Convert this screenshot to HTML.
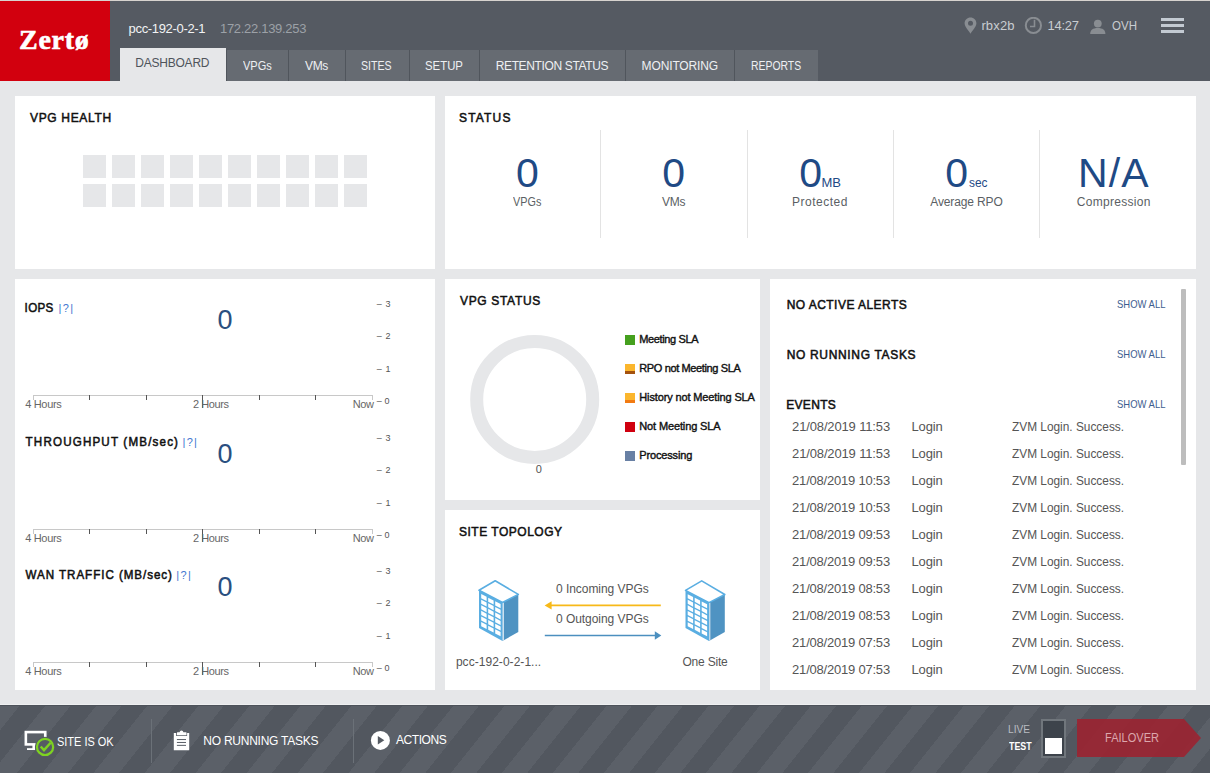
<!DOCTYPE html>
<html><head><meta charset="utf-8"><title>Zerto Dashboard</title>
<style>
*{margin:0;padding:0;box-sizing:border-box}
html,body{width:1210px;height:773px;overflow:hidden;background:#e6e7e9;font-family:"Liberation Sans",sans-serif}
.a{position:absolute}
.t{position:absolute;line-height:1;white-space:pre;transform-origin:0 0}
.panel{position:absolute;background:#fff}
.sq{position:absolute;width:23px;height:23px;background:#e6e7e9}
.tab{position:absolute;top:50px;height:31px;background:#666b72}
.sep{position:absolute;top:50px;width:1px;height:31px;background:#50555c}
.ax{position:absolute;height:1px;background:#c8c8c8}
.tk{position:absolute;width:1px;height:5px;background:#555}
.vd{position:absolute;width:1px;background:#e3e3e3;top:130px;height:108px}
.lg{position:absolute;left:625px;width:10px;height:10px}
</style></head><body>
<!-- header -->
<div class="a" style="left:0;top:0;width:1210px;height:81px;background:#555a62"></div>
<div class="a" style="left:0;top:0;width:1210px;height:1px;background:#d7d3cf"></div>
<div class="a" style="left:0;top:1px;width:110px;height:80px;background:#d2000e"></div>
<div class="a" style="left:120px;top:48px;width:106px;height:33px;background:#e6e7e9"></div>
<div class="tab" style="left:227px;width:591px"></div>
<div class="sep" style="left:226px"></div>
<div class="sep" style="left:288px"></div>
<div class="sep" style="left:345px"></div>
<div class="sep" style="left:409px"></div>
<div class="sep" style="left:479px"></div>
<div class="sep" style="left:625px"></div>
<div class="sep" style="left:734px"></div>
<!-- header icons -->
<svg class="a" style="left:964px;top:17px" width="13" height="17" viewBox="0 0 13 17"><path d="M6.5 0.5C3.2 0.5 0.6 3.1 0.6 6.3c0 3.6 4.2 7.3 5.9 10.4c1.7-3.1 5.9-6.8 5.9-10.4C12.4 3.1 9.8 0.5 6.5 0.5z M6.5 3.8a2.5 2.5 0 1 1 0 5a2.5 2.5 0 1 1 0-5z" fill="#898d92" fill-rule="evenodd"/></svg>
<svg class="a" style="left:1024px;top:17px" width="19" height="18" viewBox="0 0 19 18"><circle cx="9.4" cy="8.4" r="7.6" fill="none" stroke="#898d92" stroke-width="2"/><path d="M10.5 2.8V9.5H6" fill="none" stroke="#898d92" stroke-width="1.6"/></svg>
<svg class="a" style="left:1090px;top:19px" width="16" height="15" viewBox="0 0 16 15"><circle cx="7.8" cy="4.6" r="3.9" fill="#898d92"/><path d="M0.2 15c0-4 2.6-6 7.6-6s7.6 2 7.6 6z" fill="#898d92"/></svg>
<div class="a" style="left:1161px;top:18px;width:23px;height:3px;background:#c3cad2"></div>
<div class="a" style="left:1161px;top:24px;width:23px;height:3px;background:#c3cad2"></div>
<div class="a" style="left:1161px;top:30px;width:23px;height:3px;background:#c3cad2"></div>

<!-- panels -->
<div class="panel" style="left:15px;top:96px;width:420px;height:173px"></div>
<div class="panel" style="left:445px;top:96px;width:751px;height:173px"></div>
<div class="panel" style="left:15px;top:279px;width:420px;height:411px"></div>
<div class="panel" style="left:445px;top:279px;width:315px;height:221px"></div>
<div class="panel" style="left:445px;top:510px;width:315px;height:180px"></div>
<div class="panel" style="left:770px;top:279px;width:426px;height:411px"></div>

<!-- VPG health squares -->
<div class="sq" style="left:83px;top:155px"></div>
<div class="sq" style="left:112px;top:155px"></div>
<div class="sq" style="left:141px;top:155px"></div>
<div class="sq" style="left:170px;top:155px"></div>
<div class="sq" style="left:199px;top:155px"></div>
<div class="sq" style="left:228px;top:155px"></div>
<div class="sq" style="left:257px;top:155px"></div>
<div class="sq" style="left:286px;top:155px"></div>
<div class="sq" style="left:315px;top:155px"></div>
<div class="sq" style="left:344px;top:155px"></div>
<div class="sq" style="left:83px;top:184px"></div>
<div class="sq" style="left:112px;top:184px"></div>
<div class="sq" style="left:141px;top:184px"></div>
<div class="sq" style="left:170px;top:184px"></div>
<div class="sq" style="left:199px;top:184px"></div>
<div class="sq" style="left:228px;top:184px"></div>
<div class="sq" style="left:257px;top:184px"></div>
<div class="sq" style="left:286px;top:184px"></div>
<div class="sq" style="left:315px;top:184px"></div>
<div class="sq" style="left:344px;top:184px"></div>

<!-- status dividers -->
<div class="vd" style="left:600px"></div>
<div class="vd" style="left:747px"></div>
<div class="vd" style="left:893px"></div>
<div class="vd" style="left:1039px"></div>

<!-- charts -->
<div class="ax" style="left:33px;top:395px;width:340px"></div>
<div class="a" style="left:33px;top:395px;width:1px;height:5px;background:#c8c8c8"></div>
<div class="tk" style="left:89px;top:395px"></div>
<div class="tk" style="left:146px;top:395px"></div>
<div class="tk" style="left:202px;top:395px;height:13px"></div>
<div class="tk" style="left:259px;top:395px"></div>
<div class="tk" style="left:315px;top:395px"></div>
<div class="a" style="left:372px;top:395px;width:1px;height:5px;background:#c8c8c8"></div>
<div class="ax" style="left:33px;top:529px;width:340px"></div>
<div class="a" style="left:33px;top:529px;width:1px;height:5px;background:#c8c8c8"></div>
<div class="tk" style="left:89px;top:529px"></div>
<div class="tk" style="left:146px;top:529px"></div>
<div class="tk" style="left:202px;top:529px;height:13px"></div>
<div class="tk" style="left:259px;top:529px"></div>
<div class="tk" style="left:315px;top:529px"></div>
<div class="a" style="left:372px;top:529px;width:1px;height:5px;background:#c8c8c8"></div>
<div class="ax" style="left:33px;top:662px;width:340px"></div>
<div class="a" style="left:33px;top:662px;width:1px;height:5px;background:#c8c8c8"></div>
<div class="tk" style="left:89px;top:662px"></div>
<div class="tk" style="left:146px;top:662px"></div>
<div class="tk" style="left:202px;top:662px;height:13px"></div>
<div class="tk" style="left:259px;top:662px"></div>
<div class="tk" style="left:315px;top:662px"></div>
<div class="a" style="left:372px;top:662px;width:1px;height:5px;background:#c8c8c8"></div>

<!-- donut -->
<svg class="a" style="left:469px;top:333px" width="132" height="132" viewBox="0 0 132 132"><circle cx="65.7" cy="66.4" r="58" fill="none" stroke="#e6e7e9" stroke-width="13"/></svg>
<!-- legend -->
<div class="lg" style="top:335px;background:#45a01e"></div>
<div class="lg" style="top:364px;background:#fbb62d"></div><div class="lg" style="top:371px;height:3px;background:#a3520f"></div>
<div class="lg" style="top:393px;background:#fbb62d"></div><div class="lg" style="top:400px;height:3px;background:#f27b12"></div>
<div class="lg" style="top:422px;background:#d0000f"></div>
<div class="lg" style="top:451px;background:#6880a4"></div>

<!-- topology -->
<svg class="a" style="left:469px;top:575px" width="60" height="70" viewBox="0 0 60 70"><g transform="translate(0 0.4)">
<path d="M33.5 27.1L49.3 19V56.6L33.5 65.6z" fill="#4f93c2"/>
<path d="M26.2 5.4L49.3 19L33.5 27.1L10 14.9z" fill="#fff" stroke="#5aaee2" stroke-width="1.6" stroke-linejoin="round"/>
<path d="M10 14.9L33.5 27.1V65.6L10 52.5z" fill="#5aaee2"/>
<path d="M34.3 27.5V65" stroke="#fff" stroke-width="0.9"/>
<g transform="translate(10 14.9) skewY(27.4)">
<rect x="2.2" y="2.6" width="5.4" height="4.1" fill="#fff"/>
<rect x="2.2" y="8.2" width="5.4" height="4.1" fill="#fff"/>
<rect x="2.2" y="13.8" width="5.4" height="4.1" fill="#fff"/>
<rect x="2.2" y="19.4" width="5.4" height="4.1" fill="#fff"/>
<rect x="2.2" y="25.0" width="5.4" height="4.1" fill="#fff"/>
<rect x="2.2" y="30.6" width="5.4" height="4.1" fill="#fff"/>
<rect x="9.2" y="2.6" width="5.4" height="4.1" fill="#fff"/>
<rect x="9.2" y="8.2" width="5.4" height="4.1" fill="#fff"/>
<rect x="9.2" y="13.8" width="5.4" height="4.1" fill="#fff"/>
<rect x="9.2" y="19.4" width="5.4" height="4.1" fill="#fff"/>
<rect x="9.2" y="25.0" width="5.4" height="4.1" fill="#fff"/>
<rect x="9.2" y="30.6" width="5.4" height="4.1" fill="#fff"/>
<rect x="16.2" y="2.6" width="5.4" height="4.1" fill="#fff"/>
<rect x="16.2" y="8.2" width="5.4" height="4.1" fill="#fff"/>
<rect x="16.2" y="13.8" width="5.4" height="4.1" fill="#fff"/>
<rect x="16.2" y="19.4" width="5.4" height="4.1" fill="#fff"/>
<rect x="16.2" y="25.0" width="5.4" height="4.1" fill="#fff"/>
<rect x="16.2" y="30.6" width="5.4" height="4.1" fill="#fff"/>
</g></g>
</svg>
<svg class="a" style="left:675px;top:575px" width="60" height="70" viewBox="0 0 60 70"><g transform="translate(0.5 0.5)">
<path d="M33.5 27.1L49.3 19V56.6L33.5 65.6z" fill="#4f93c2"/>
<path d="M26.2 5.4L49.3 19L33.5 27.1L10 14.9z" fill="#fff" stroke="#5aaee2" stroke-width="1.6" stroke-linejoin="round"/>
<path d="M10 14.9L33.5 27.1V65.6L10 52.5z" fill="#5aaee2"/>
<path d="M34.3 27.5V65" stroke="#fff" stroke-width="0.9"/>
<g transform="translate(10 14.9) skewY(27.4)">
<rect x="2.2" y="2.6" width="5.4" height="4.1" fill="#fff"/>
<rect x="2.2" y="8.2" width="5.4" height="4.1" fill="#fff"/>
<rect x="2.2" y="13.8" width="5.4" height="4.1" fill="#fff"/>
<rect x="2.2" y="19.4" width="5.4" height="4.1" fill="#fff"/>
<rect x="2.2" y="25.0" width="5.4" height="4.1" fill="#fff"/>
<rect x="2.2" y="30.6" width="5.4" height="4.1" fill="#fff"/>
<rect x="9.2" y="2.6" width="5.4" height="4.1" fill="#fff"/>
<rect x="9.2" y="8.2" width="5.4" height="4.1" fill="#fff"/>
<rect x="9.2" y="13.8" width="5.4" height="4.1" fill="#fff"/>
<rect x="9.2" y="19.4" width="5.4" height="4.1" fill="#fff"/>
<rect x="9.2" y="25.0" width="5.4" height="4.1" fill="#fff"/>
<rect x="9.2" y="30.6" width="5.4" height="4.1" fill="#fff"/>
<rect x="16.2" y="2.6" width="5.4" height="4.1" fill="#fff"/>
<rect x="16.2" y="8.2" width="5.4" height="4.1" fill="#fff"/>
<rect x="16.2" y="13.8" width="5.4" height="4.1" fill="#fff"/>
<rect x="16.2" y="19.4" width="5.4" height="4.1" fill="#fff"/>
<rect x="16.2" y="25.0" width="5.4" height="4.1" fill="#fff"/>
<rect x="16.2" y="30.6" width="5.4" height="4.1" fill="#fff"/>
</g></g>
</svg>
<svg class="a" style="left:540px;top:595px" width="130" height="50" viewBox="0 0 130 50"><path d="M10 10.4H120.8" stroke="#f7b919" stroke-width="1.6"/><path d="M4.6 10.4L11.6 6.2V14.6z" fill="#f7b919"/><path d="M4.8 40.5H116" stroke="#4b8fbf" stroke-width="1.6"/><path d="M121.3 40.5L114.8 36.3V44.7z" fill="#4b8fbf"/></svg>

<!-- scrollbar -->
<div class="a" style="left:1181px;top:289px;width:5px;height:176px;background:#bdbdbd;border-radius:1px"></div>

<!-- footer -->
<div class="a" style="left:0;top:704px;width:1210px;height:69px;background:repeating-linear-gradient(128.66deg,#5b6068 0px,#5b6068 16.45px,#52575f 16.45px,#52575f 36.4px,#5b6068 36.4px,#5b6068 39.85px)"></div>
<div class="a" style="left:0;top:704px;width:1210px;height:1px;background:#eff0f1"></div>
<div class="a" style="left:0;top:705px;width:1210px;height:1px;background:#4d525a"></div>
<div class="a" style="left:151px;top:719px;width:1px;height:44px;background:#6b7178"></div>
<div class="a" style="left:353px;top:719px;width:1px;height:44px;background:#6b7178"></div>
<!-- site ok icon -->
<svg class="a" style="left:20px;top:725px" width="40" height="32" viewBox="0 0 40 32"><rect x="5.85" y="7.1" width="19.4" height="12.3" fill="none" stroke="#fff" stroke-width="2.6"/><rect x="12.4" y="20" width="2.7" height="4.9" fill="#fff"/><rect x="7" y="23.2" width="8.1" height="1.8" fill="#fff"/><circle cx="25.05" cy="21.9" r="10.2" fill="#565b63"/><circle cx="25.05" cy="21.9" r="8.1" fill="none" stroke="#7ed321" stroke-width="2.2"/><path d="M20.7 21.5L24 25.1L30.6 17.8" fill="none" stroke="#7ed321" stroke-width="2.4"/></svg>
<!-- clipboard -->
<svg class="a" style="left:168px;top:725px" width="30" height="30" viewBox="0 0 30 30"><path d="M5.8 8H8.1V10.9H19.1V8H21.2V25.2H5.8Z" fill="#fff"/><path d="M8.9 7.9Q8.9 7.3 9.5 7.3H11.6Q11.9 5.4 13.5 5.4Q15.1 5.4 15.4 7.3H18.1Q18.5 7.3 18.5 7.9V10.2H8.9Z" fill="#fff"/><rect x="8.9" y="14.05" width="9.1" height="1" fill="#5a5f67"/><rect x="8.9" y="16.96" width="9.1" height="1" fill="#5a5f67"/><rect x="8.9" y="19.87" width="9.1" height="1" fill="#5a5f67"/></svg>
<!-- play -->
<svg class="a" style="left:370px;top:730px" width="21" height="21" viewBox="0 0 21 21"><circle cx="10.4" cy="10.4" r="9.5" fill="#fff"/><path d="M7.8 6.1L14.3 10.3L7.8 14.4z" fill="#555a62"/></svg>
<!-- toggle -->
<div class="a" style="left:1041px;top:719px;width:25px;height:39px;background:#3d434b;border:2px solid #70767c"></div>
<div class="a" style="left:1045px;top:738px;width:17px;height:16px;background:#fff"></div>
<!-- failover -->
<svg class="a" style="left:1077px;top:719px" width="125" height="38" viewBox="0 0 125 38"><path d="M0 0H107L124 19L107 38H0z" fill="#a0202e" fill-opacity="0.85"/></svg>

<div class="t" style="left:19.0px;top:26.29px;font-size:28px;font-weight:700;color:#fff;letter-spacing:0.75px;font-family:'Liberation Serif', serif;-webkit-text-stroke:0.6px #fff;">Zertø</div>
<div class="t" style="left:128.6px;top:21.89px;font-size:13px;font-weight:400;color:#f2f3f4;letter-spacing:-0.333px;font-family:'Liberation Sans', sans-serif;">pcc-192-0-2-1</div>
<div class="t" style="left:220.0px;top:21.89px;font-size:13px;font-weight:400;color:#9ca1a7;letter-spacing:-0.308px;font-family:'Liberation Sans', sans-serif;">172.22.139.253</div>
<div class="t" style="left:981.4px;top:18.79px;font-size:13px;font-weight:400;color:#c9cdd1;letter-spacing:0.15px;font-family:'Liberation Sans', sans-serif;">rbx2b</div>
<div class="t" style="left:1047.6px;top:18.79px;font-size:13px;font-weight:400;color:#c9cdd1;letter-spacing:-0.3px;font-family:'Liberation Sans', sans-serif;">14:27</div>
<div class="t" style="left:1111.7px;top:18.79px;font-size:13px;font-weight:400;color:#c9cdd1;letter-spacing:0px;font-family:'Liberation Sans', sans-serif;transform:scale(0.8852,1.0);">OVH</div>
<div class="t" style="left:135.3px;top:56.74px;font-size:12px;font-weight:400;color:#4f545b;letter-spacing:-0.225px;font-family:'Liberation Sans', sans-serif;">DASHBOARD</div>
<div class="t" style="left:242.8px;top:59.54px;font-size:12px;font-weight:400;color:#eef0f2;letter-spacing:0px;font-family:'Liberation Sans', sans-serif;transform:scale(0.9194,1.0);">VPGs</div>
<div class="t" style="left:305.0px;top:59.54px;font-size:12px;font-weight:400;color:#eef0f2;letter-spacing:-0.35px;font-family:'Liberation Sans', sans-serif;">VMs</div>
<div class="t" style="left:361.12px;top:59.54px;font-size:12px;font-weight:400;color:#eef0f2;letter-spacing:0px;font-family:'Liberation Sans', sans-serif;transform:scale(0.8824,1.0);">SITES</div>
<div class="t" style="left:425.05px;top:59.54px;font-size:12px;font-weight:400;color:#eef0f2;letter-spacing:0px;font-family:'Liberation Sans', sans-serif;transform:scale(0.9487,1.0);">SETUP</div>
<div class="t" style="left:495.7px;top:59.54px;font-size:12px;font-weight:400;color:#eef0f2;letter-spacing:-0.36px;font-family:'Liberation Sans', sans-serif;">RETENTION STATUS</div>
<div class="t" style="left:641.6px;top:59.54px;font-size:12px;font-weight:400;color:#eef0f2;letter-spacing:-0.133px;font-family:'Liberation Sans', sans-serif;">MONITORING</div>
<div class="t" style="left:750.63px;top:59.54px;font-size:12px;font-weight:400;color:#eef0f2;letter-spacing:0px;font-family:'Liberation Sans', sans-serif;transform:scale(0.8684,1.0);">REPORTS</div>
<div class="t" style="left:30.0px;top:110.97px;font-size:12px;font-weight:400;color:#111;letter-spacing:0.667px;font-family:'Liberation Sans', sans-serif;transform:scale(1.0,1.125);-webkit-text-stroke:0.5px #111;">VPG HEALTH</div>
<div class="t" style="left:459.0px;top:110.97px;font-size:12px;font-weight:400;color:#111;letter-spacing:1.18px;font-family:'Liberation Sans', sans-serif;transform:scale(1.0,1.125);-webkit-text-stroke:0.5px #111;">STATUS</div>
<div class="t" style="left:460.0px;top:293.77px;font-size:12px;font-weight:400;color:#111;letter-spacing:0.667px;font-family:'Liberation Sans', sans-serif;transform:scale(1.0,1.125);-webkit-text-stroke:0.5px #111;">VPG STATUS</div>
<div class="t" style="left:459.0px;top:525.17px;font-size:12px;font-weight:400;color:#111;letter-spacing:0.508px;font-family:'Liberation Sans', sans-serif;transform:scale(1.0,1.125);-webkit-text-stroke:0.5px #111;">SITE TOPOLOGY</div>
<div class="t" style="left:786.7px;top:297.77px;font-size:12px;font-weight:400;color:#111;letter-spacing:0.46px;font-family:'Liberation Sans', sans-serif;transform:scale(1.0,1.125);-webkit-text-stroke:0.5px #111;">NO ACTIVE ALERTS</div>
<div class="t" style="left:786.7px;top:347.77px;font-size:12px;font-weight:400;color:#111;letter-spacing:0.667px;font-family:'Liberation Sans', sans-serif;transform:scale(1.0,1.125);-webkit-text-stroke:0.5px #111;">NO RUNNING TASKS</div>
<div class="t" style="left:786.2px;top:397.87px;font-size:12px;font-weight:400;color:#111;letter-spacing:0.32px;font-family:'Liberation Sans', sans-serif;transform:scale(1.0,1.125);-webkit-text-stroke:0.5px #111;">EVENTS</div>
<div class="t" style="left:1117.3px;top:299.29px;font-size:11px;font-weight:400;color:#3d5d8f;letter-spacing:0px;font-family:'Liberation Sans', sans-serif;transform:scale(0.8607,1.0);">SHOW ALL</div>
<div class="t" style="left:1117.3px;top:349.29px;font-size:11px;font-weight:400;color:#3d5d8f;letter-spacing:0px;font-family:'Liberation Sans', sans-serif;transform:scale(0.8607,1.0);">SHOW ALL</div>
<div class="t" style="left:1117.3px;top:399.29px;font-size:11px;font-weight:400;color:#3d5d8f;letter-spacing:0px;font-family:'Liberation Sans', sans-serif;transform:scale(0.8607,1.0);">SHOW ALL</div>
<div class="t" style="left:515.95px;top:153.09px;font-size:41px;font-weight:400;color:#1f4a85;letter-spacing:0px;font-family:'Liberation Sans', sans-serif;">0</div>
<div class="t" style="left:662.15px;top:153.09px;font-size:41px;font-weight:400;color:#1f4a85;letter-spacing:0px;font-family:'Liberation Sans', sans-serif;">0</div>
<div class="t" style="left:799.25px;top:153.09px;font-size:41px;font-weight:400;color:#1f4a85;letter-spacing:0px;font-family:'Liberation Sans', sans-serif;">0</div>
<div class="t" style="left:821.5px;top:175.59px;font-size:13px;font-weight:400;color:#1f4a85;letter-spacing:0.0px;font-family:'Liberation Sans', sans-serif;">MB</div>
<div class="t" style="left:945.2px;top:153.09px;font-size:41px;font-weight:400;color:#1f4a85;letter-spacing:0px;font-family:'Liberation Sans', sans-serif;">0</div>
<div class="t" style="left:968.6px;top:176.09px;font-size:13px;font-weight:400;color:#1f4a85;letter-spacing:0px;font-family:'Liberation Sans', sans-serif;transform:scale(0.915,1.0);">sec</div>
<div class="t" style="left:1078.0px;top:153.09px;font-size:41px;font-weight:400;color:#1f4a85;letter-spacing:1.1px;font-family:'Liberation Sans', sans-serif;">N/A</div>
<div class="t" style="left:513.4px;top:195.54px;font-size:12px;font-weight:400;color:#5b5f64;letter-spacing:0px;font-family:'Liberation Sans', sans-serif;transform:scale(0.9032,1.0);">VPGs</div>
<div class="t" style="left:662.0px;top:195.74px;font-size:12px;font-weight:400;color:#5b5f64;letter-spacing:-0.3px;font-family:'Liberation Sans', sans-serif;">VMs</div>
<div class="t" style="left:792.0px;top:195.84px;font-size:12px;font-weight:400;color:#5b5f64;letter-spacing:0.5px;font-family:'Liberation Sans', sans-serif;">Protected</div>
<div class="t" style="left:930.3px;top:195.84px;font-size:12px;font-weight:400;color:#5b5f64;letter-spacing:-0.13px;font-family:'Liberation Sans', sans-serif;">Average RPO</div>
<div class="t" style="left:1076.7px;top:195.84px;font-size:12px;font-weight:400;color:#5b5f64;letter-spacing:0.31px;font-family:'Liberation Sans', sans-serif;">Compression</div>
<div class="t" style="left:24.6px;top:300.75px;font-size:11.6px;font-weight:400;color:#111;letter-spacing:0.333px;font-family:'Liberation Sans', sans-serif;transform:scale(1.0,1.125);-webkit-text-stroke:0.5px #111;">IOPS</div>
<div class="t" style="left:58.6px;top:302.69px;font-size:11px;font-weight:400;color:#3f76d0;letter-spacing:1.3px;font-family:'Liberation Sans', sans-serif;">|?|</div>
<div class="t" style="left:217.4px;top:306.94px;font-size:27px;font-weight:400;color:#2a4f80;letter-spacing:0px;font-family:'Liberation Sans', sans-serif;">0</div>
<div class="t" style="left:25.2px;top:399.09px;font-size:11px;font-weight:400;color:#666;letter-spacing:-0.317px;font-family:'Liberation Sans', sans-serif;">4 Hours</div>
<div class="t" style="left:193.0px;top:399.09px;font-size:11px;font-weight:400;color:#666;letter-spacing:-0.417px;font-family:'Liberation Sans', sans-serif;">2 Hours</div>
<div class="t" style="left:352.8px;top:399.09px;font-size:11px;font-weight:400;color:#666;letter-spacing:-0.4px;font-family:'Liberation Sans', sans-serif;">Now</div>
<div class="t" style="left:376.8px;top:299.78px;font-size:9px;font-weight:400;color:#555;letter-spacing:0.55px;font-family:'Liberation Sans', sans-serif;">– 3</div>
<div class="t" style="left:376.8px;top:332.28px;font-size:9px;font-weight:400;color:#555;letter-spacing:0.55px;font-family:'Liberation Sans', sans-serif;">– 2</div>
<div class="t" style="left:376.8px;top:364.78px;font-size:9px;font-weight:400;color:#555;letter-spacing:0.55px;font-family:'Liberation Sans', sans-serif;">– 1</div>
<div class="t" style="left:376.8px;top:397.28px;font-size:9px;font-weight:400;color:#555;letter-spacing:0.05px;font-family:'Liberation Sans', sans-serif;">– 0</div>
<div class="t" style="left:25.6px;top:434.95px;font-size:11.6px;font-weight:400;color:#111;letter-spacing:1.178px;font-family:'Liberation Sans', sans-serif;transform:scale(1.0,1.125);-webkit-text-stroke:0.5px #111;">THROUGHPUT (MB/sec)</div>
<div class="t" style="left:182.6px;top:436.89px;font-size:11px;font-weight:400;color:#3f76d0;letter-spacing:1.2px;font-family:'Liberation Sans', sans-serif;">|?|</div>
<div class="t" style="left:217.4px;top:441.14px;font-size:27px;font-weight:400;color:#2a4f80;letter-spacing:0px;font-family:'Liberation Sans', sans-serif;">0</div>
<div class="t" style="left:25.2px;top:533.29px;font-size:11px;font-weight:400;color:#666;letter-spacing:-0.317px;font-family:'Liberation Sans', sans-serif;">4 Hours</div>
<div class="t" style="left:193.0px;top:533.29px;font-size:11px;font-weight:400;color:#666;letter-spacing:-0.417px;font-family:'Liberation Sans', sans-serif;">2 Hours</div>
<div class="t" style="left:352.8px;top:533.29px;font-size:11px;font-weight:400;color:#666;letter-spacing:-0.4px;font-family:'Liberation Sans', sans-serif;">Now</div>
<div class="t" style="left:376.8px;top:433.98px;font-size:9px;font-weight:400;color:#555;letter-spacing:0.55px;font-family:'Liberation Sans', sans-serif;">– 3</div>
<div class="t" style="left:376.8px;top:466.48px;font-size:9px;font-weight:400;color:#555;letter-spacing:0.55px;font-family:'Liberation Sans', sans-serif;">– 2</div>
<div class="t" style="left:376.8px;top:498.98px;font-size:9px;font-weight:400;color:#555;letter-spacing:0.55px;font-family:'Liberation Sans', sans-serif;">– 1</div>
<div class="t" style="left:376.8px;top:531.48px;font-size:9px;font-weight:400;color:#555;letter-spacing:0.05px;font-family:'Liberation Sans', sans-serif;">– 0</div>
<div class="t" style="left:25.6px;top:567.95px;font-size:11.6px;font-weight:400;color:#111;letter-spacing:0.958px;font-family:'Liberation Sans', sans-serif;transform:scale(1.0,1.125);-webkit-text-stroke:0.5px #111;">WAN TRAFFIC (MB/sec)</div>
<div class="t" style="left:176.3px;top:569.89px;font-size:11px;font-weight:400;color:#3f76d0;letter-spacing:1.35px;font-family:'Liberation Sans', sans-serif;">|?|</div>
<div class="t" style="left:217.4px;top:574.14px;font-size:27px;font-weight:400;color:#2a4f80;letter-spacing:0px;font-family:'Liberation Sans', sans-serif;">0</div>
<div class="t" style="left:25.2px;top:666.29px;font-size:11px;font-weight:400;color:#666;letter-spacing:-0.317px;font-family:'Liberation Sans', sans-serif;">4 Hours</div>
<div class="t" style="left:193.0px;top:666.29px;font-size:11px;font-weight:400;color:#666;letter-spacing:-0.417px;font-family:'Liberation Sans', sans-serif;">2 Hours</div>
<div class="t" style="left:352.8px;top:666.29px;font-size:11px;font-weight:400;color:#666;letter-spacing:-0.4px;font-family:'Liberation Sans', sans-serif;">Now</div>
<div class="t" style="left:376.8px;top:566.98px;font-size:9px;font-weight:400;color:#555;letter-spacing:0.55px;font-family:'Liberation Sans', sans-serif;">– 3</div>
<div class="t" style="left:376.8px;top:599.48px;font-size:9px;font-weight:400;color:#555;letter-spacing:0.55px;font-family:'Liberation Sans', sans-serif;">– 2</div>
<div class="t" style="left:376.8px;top:631.98px;font-size:9px;font-weight:400;color:#555;letter-spacing:0.55px;font-family:'Liberation Sans', sans-serif;">– 1</div>
<div class="t" style="left:376.8px;top:664.48px;font-size:9px;font-weight:400;color:#555;letter-spacing:0.05px;font-family:'Liberation Sans', sans-serif;">– 0</div>
<div class="t" style="left:535.7px;top:463.69px;font-size:11px;font-weight:400;color:#555;letter-spacing:0px;font-family:'Liberation Sans', sans-serif;">0</div>
<div class="t" style="left:639.3px;top:333.89px;font-size:11px;font-weight:400;color:#111;letter-spacing:-0.38px;font-family:'Liberation Sans', sans-serif;-webkit-text-stroke:0.4px #111;">Meeting SLA</div>
<div class="t" style="left:639.3px;top:362.99px;font-size:11px;font-weight:400;color:#111;letter-spacing:-0.372px;font-family:'Liberation Sans', sans-serif;-webkit-text-stroke:0.4px #111;">RPO not Meeting SLA</div>
<div class="t" style="left:639.3px;top:392.09px;font-size:11px;font-weight:400;color:#111;letter-spacing:-0.136px;font-family:'Liberation Sans', sans-serif;-webkit-text-stroke:0.4px #111;">History not Meeting SLA</div>
<div class="t" style="left:639.3px;top:421.19px;font-size:11px;font-weight:400;color:#111;letter-spacing:-0.136px;font-family:'Liberation Sans', sans-serif;-webkit-text-stroke:0.4px #111;">Not Meeting SLA</div>
<div class="t" style="left:639.3px;top:450.29px;font-size:11px;font-weight:400;color:#111;letter-spacing:-0.156px;font-family:'Liberation Sans', sans-serif;-webkit-text-stroke:0.4px #111;">Processing</div>
<div class="t" style="left:556.0px;top:582.64px;font-size:12px;font-weight:400;color:#555;letter-spacing:-0.05px;font-family:'Liberation Sans', sans-serif;">0 Incoming VPGs</div>
<div class="t" style="left:556.0px;top:613.04px;font-size:12px;font-weight:400;color:#555;letter-spacing:-0.05px;font-family:'Liberation Sans', sans-serif;">0 Outgoing VPGs</div>
<div class="t" style="left:455.9px;top:655.74px;font-size:12px;font-weight:400;color:#555;letter-spacing:0.04px;font-family:'Liberation Sans', sans-serif;">pcc-192-0-2-1...</div>
<div class="t" style="left:682.5px;top:655.74px;font-size:12px;font-weight:400;color:#555;letter-spacing:-0.214px;font-family:'Liberation Sans', sans-serif;">One Site</div>
<div class="t" style="left:792.1px;top:420.19px;font-size:13px;font-weight:400;color:#555;letter-spacing:-0.147px;font-family:'Liberation Sans', sans-serif;">21/08/2019 11:53</div>
<div class="t" style="left:911.5px;top:420.19px;font-size:13px;font-weight:400;color:#555;letter-spacing:-0.125px;font-family:'Liberation Sans', sans-serif;">Login</div>
<div class="t" style="left:1012.3px;top:420.19px;font-size:13px;font-weight:400;color:#555;letter-spacing:0px;font-family:'Liberation Sans', sans-serif;transform:scale(0.9123,1.0);">ZVM Login. Success.</div>
<div class="t" style="left:792.1px;top:447.19px;font-size:13px;font-weight:400;color:#555;letter-spacing:-0.147px;font-family:'Liberation Sans', sans-serif;">21/08/2019 11:53</div>
<div class="t" style="left:911.5px;top:447.19px;font-size:13px;font-weight:400;color:#555;letter-spacing:-0.125px;font-family:'Liberation Sans', sans-serif;">Login</div>
<div class="t" style="left:1012.3px;top:447.19px;font-size:13px;font-weight:400;color:#555;letter-spacing:0px;font-family:'Liberation Sans', sans-serif;transform:scale(0.9123,1.0);">ZVM Login. Success.</div>
<div class="t" style="left:792.1px;top:474.19px;font-size:13px;font-weight:400;color:#555;letter-spacing:-0.213px;font-family:'Liberation Sans', sans-serif;">21/08/2019 10:53</div>
<div class="t" style="left:911.5px;top:474.19px;font-size:13px;font-weight:400;color:#555;letter-spacing:-0.125px;font-family:'Liberation Sans', sans-serif;">Login</div>
<div class="t" style="left:1012.3px;top:474.19px;font-size:13px;font-weight:400;color:#555;letter-spacing:0px;font-family:'Liberation Sans', sans-serif;transform:scale(0.9123,1.0);">ZVM Login. Success.</div>
<div class="t" style="left:792.1px;top:501.19px;font-size:13px;font-weight:400;color:#555;letter-spacing:-0.213px;font-family:'Liberation Sans', sans-serif;">21/08/2019 10:53</div>
<div class="t" style="left:911.5px;top:501.19px;font-size:13px;font-weight:400;color:#555;letter-spacing:-0.125px;font-family:'Liberation Sans', sans-serif;">Login</div>
<div class="t" style="left:1012.3px;top:501.19px;font-size:13px;font-weight:400;color:#555;letter-spacing:0px;font-family:'Liberation Sans', sans-serif;transform:scale(0.9123,1.0);">ZVM Login. Success.</div>
<div class="t" style="left:792.1px;top:528.19px;font-size:13px;font-weight:400;color:#555;letter-spacing:-0.213px;font-family:'Liberation Sans', sans-serif;">21/08/2019 09:53</div>
<div class="t" style="left:911.5px;top:528.19px;font-size:13px;font-weight:400;color:#555;letter-spacing:-0.125px;font-family:'Liberation Sans', sans-serif;">Login</div>
<div class="t" style="left:1012.3px;top:528.19px;font-size:13px;font-weight:400;color:#555;letter-spacing:0px;font-family:'Liberation Sans', sans-serif;transform:scale(0.9123,1.0);">ZVM Login. Success.</div>
<div class="t" style="left:792.1px;top:555.19px;font-size:13px;font-weight:400;color:#555;letter-spacing:-0.213px;font-family:'Liberation Sans', sans-serif;">21/08/2019 09:53</div>
<div class="t" style="left:911.5px;top:555.19px;font-size:13px;font-weight:400;color:#555;letter-spacing:-0.125px;font-family:'Liberation Sans', sans-serif;">Login</div>
<div class="t" style="left:1012.3px;top:555.19px;font-size:13px;font-weight:400;color:#555;letter-spacing:0px;font-family:'Liberation Sans', sans-serif;transform:scale(0.9123,1.0);">ZVM Login. Success.</div>
<div class="t" style="left:792.1px;top:582.19px;font-size:13px;font-weight:400;color:#555;letter-spacing:-0.213px;font-family:'Liberation Sans', sans-serif;">21/08/2019 08:53</div>
<div class="t" style="left:911.5px;top:582.19px;font-size:13px;font-weight:400;color:#555;letter-spacing:-0.125px;font-family:'Liberation Sans', sans-serif;">Login</div>
<div class="t" style="left:1012.3px;top:582.19px;font-size:13px;font-weight:400;color:#555;letter-spacing:0px;font-family:'Liberation Sans', sans-serif;transform:scale(0.9123,1.0);">ZVM Login. Success.</div>
<div class="t" style="left:792.1px;top:609.19px;font-size:13px;font-weight:400;color:#555;letter-spacing:-0.213px;font-family:'Liberation Sans', sans-serif;">21/08/2019 08:53</div>
<div class="t" style="left:911.5px;top:609.19px;font-size:13px;font-weight:400;color:#555;letter-spacing:-0.125px;font-family:'Liberation Sans', sans-serif;">Login</div>
<div class="t" style="left:1012.3px;top:609.19px;font-size:13px;font-weight:400;color:#555;letter-spacing:0px;font-family:'Liberation Sans', sans-serif;transform:scale(0.9123,1.0);">ZVM Login. Success.</div>
<div class="t" style="left:792.1px;top:636.19px;font-size:13px;font-weight:400;color:#555;letter-spacing:-0.213px;font-family:'Liberation Sans', sans-serif;">21/08/2019 07:53</div>
<div class="t" style="left:911.5px;top:636.19px;font-size:13px;font-weight:400;color:#555;letter-spacing:-0.125px;font-family:'Liberation Sans', sans-serif;">Login</div>
<div class="t" style="left:1012.3px;top:636.19px;font-size:13px;font-weight:400;color:#555;letter-spacing:0px;font-family:'Liberation Sans', sans-serif;transform:scale(0.9123,1.0);">ZVM Login. Success.</div>
<div class="t" style="left:792.1px;top:663.19px;font-size:13px;font-weight:400;color:#555;letter-spacing:-0.213px;font-family:'Liberation Sans', sans-serif;">21/08/2019 07:53</div>
<div class="t" style="left:911.5px;top:663.19px;font-size:13px;font-weight:400;color:#555;letter-spacing:-0.125px;font-family:'Liberation Sans', sans-serif;">Login</div>
<div class="t" style="left:1012.3px;top:663.19px;font-size:13px;font-weight:400;color:#555;letter-spacing:0px;font-family:'Liberation Sans', sans-serif;transform:scale(0.9123,1.0);">ZVM Login. Success.</div>
<div class="t" style="left:56.59px;top:735.54px;font-size:12px;font-weight:400;color:#fff;letter-spacing:0px;font-family:'Liberation Sans', sans-serif;transform:scale(0.9131,1.0);">SITE IS OK</div>
<div class="t" style="left:203.3px;top:735.24px;font-size:12px;font-weight:400;color:#fff;letter-spacing:-0.247px;font-family:'Liberation Sans', sans-serif;">NO RUNNING TASKS</div>
<div class="t" style="left:396.0px;top:734.44px;font-size:12px;font-weight:400;color:#fff;letter-spacing:-0.45px;font-family:'Liberation Sans', sans-serif;">ACTIONS</div>
<div class="t" style="left:1007.78px;top:723.69px;font-size:11px;font-weight:400;color:#b9bdc2;letter-spacing:0px;font-family:'Liberation Sans', sans-serif;transform:scale(0.9217,1.0);">LIVE</div>
<div class="t" style="left:1008.7px;top:741.49px;font-size:11px;font-weight:700;color:#fff;letter-spacing:0px;font-family:'Liberation Sans', sans-serif;transform:scale(0.8034,1.0);">TEST</div>
<div class="t" style="left:1104.68px;top:731.64px;font-size:12px;font-weight:400;color:#dca7ad;letter-spacing:0px;font-family:'Liberation Sans', sans-serif;transform:scale(0.9193,1.0);">FAILOVER</div>
</body></html>
